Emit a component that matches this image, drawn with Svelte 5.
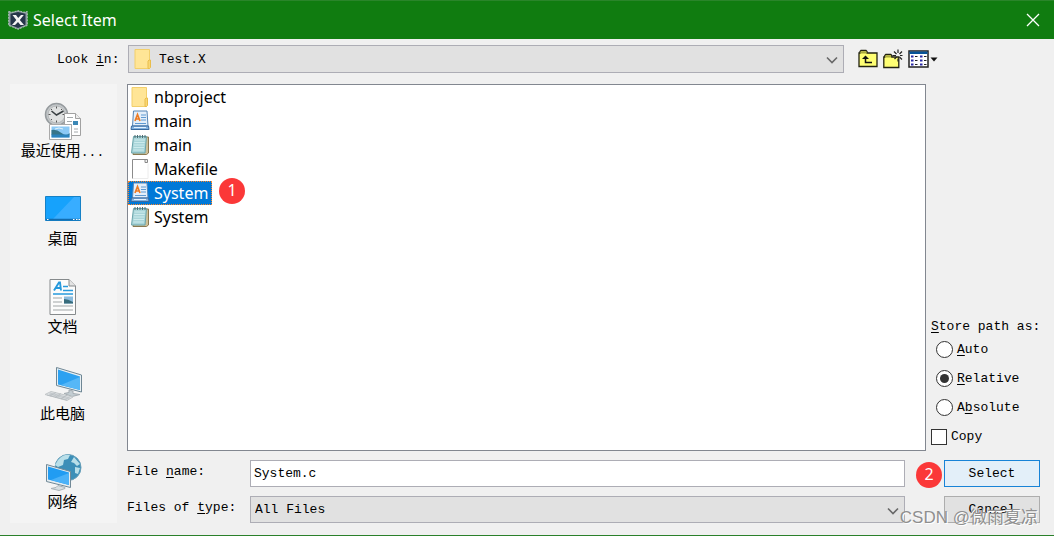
<script lang="ts">
  type FileKind = 'folder' | 'source' | 'header' | 'blank';
  type Place = 'recent' | 'desktop' | 'documents' | 'computer' | 'network';

  const places: { id: Place; label: string; more?: boolean }[] = [
    { id: 'recent', label: '最近使用', more: true },
    { id: 'desktop', label: '桌面' },
    { id: 'documents', label: '文档' },
    { id: 'computer', label: '此电脑' },
    { id: 'network', label: '网络' }
  ];

  const files: { name: string; kind: FileKind }[] = [
    { name: 'nbproject', kind: 'folder' },
    { name: 'main', kind: 'source' },
    { name: 'main', kind: 'header' },
    { name: 'Makefile', kind: 'blank' },
    { name: 'System', kind: 'source' },
    { name: 'System', kind: 'header' }
  ];

  // label split around the underlined mnemonic
  const pathModes = [
    { value: 'auto', before: '', key: 'A', after: 'uto' },
    { value: 'relative', before: '', key: 'R', after: 'elative' },
    { value: 'absolute', before: 'A', key: 'b', after: 'solute' }
  ];

  let selected = $state(4);
  let pathMode = $state('relative');
  let copy = $state(false);
  let fileName = $state('System.c');
</script>

{#snippet fileIcon(kind: FileKind)}
  <svg class="file-icon" viewBox="0 0 20 22" aria-hidden="true">
    {#if kind === 'folder'}
      <path d="M2 1.500h14.500v19H2z" fill="#ffe596" stroke="#f2cf6b" />
      <path d="M15 20.500v-7.500l1-1h1.500v7.500l-1 1z" fill="#f9d774" stroke="#e9bd4c" />
    {:else if kind === 'source'}
      <path d="M3.500 1h13.500l1 15H2.500z" fill="#e4effa" stroke="#5585b5" />
      <path d="M1.500 16h17l.5 3.500H1z" fill="#82b2e0" stroke="#3a6a9f" />
      <path d="M4 17.500h12" stroke="#e4f2ff" />
      <path d="M5 11l2.500-6.500L10 11M6 9h3" fill="none" stroke="#ed7b24" stroke-width="1.700" />
      <path d="M11 5h5M11 7.500h5M11 10h5M5 13.500h11" stroke="#5f9ad2" />
    {:else if kind === 'header'}
      <path d="M4.500 3h14v16l-2 1.500H3z" fill="#cdbf98" stroke="#8b7950" />
      <path d="M3.500 2.500h13L15 19H1.500z" fill="#a9d5d9" stroke="#6ba5ac" />
      <path d="M4.500 6H15M4.200 8.500h10.500M3.900 11h10.500M3.600 13.500H14M3.300 16h10.500" stroke="#cdebed" />
      <path d="M5 1v3M7.500 1v3M10 1v3M12.500 1v3M15 1v3" stroke="#4f6a70" />
    {:else}
      <path d="M2.500 1.500h12.500l3.500 4v15h-16z" fill="#fff" />
      <path d="M2.500 20.500V1.500H15" fill="none" stroke="#8b8b8b" />
      <path d="M15 1.500h2.500V4.500H15z" fill="#eee" stroke="#888" />
      <path d="M18 5.500v15H3" fill="none" stroke="#ececec" />
    {/if}
  </svg>
{/snippet}

{#snippet placeIcon(id: Place)}
  <svg class="place-icon" viewBox="0 0 38 38" aria-hidden="true">
    {#if id === 'recent'}
      <circle cx="12.500" cy="12.500" r="11" fill="#c3c7c9" stroke="#969b9e" stroke-width="1.500" />
      <circle cx="12.500" cy="12.500" r="8.500" fill="#dfe1e1" stroke="#b5b8ba" />
      <path d="M12.500 4.500v2M12.500 18.500v2M4.500 12.500h2M18.500 12.500h2M7 7l1 1M18 7l-1 1M7 18l1-1" stroke="#555" />
      <path d="M7.500 9l5 4 7-4" fill="none" stroke="#383f42" stroke-width="1.600" />
      <path d="M20.500 11.500h11l5 5v17h-16z" fill="#fff" stroke="#a1a1a1" />
      <path d="M31.500 11.500v5h5" fill="#eee" stroke="#a1a1a1" />
      <path d="M23 15.500h6M23 19.500h5M23 22.500h5M30 27h4M30 30h4" stroke="#a4a9ab" />
      <path d="M29 19h5v4h-5z" fill="#3c87b5" />
      <path d="M5.500 22.500h22v15h-22z" fill="#fff" stroke="#aaa" />
      <path d="M7.500 24.500h18v11h-18z" fill="#8cc9f5" />
      <path d="M7.500 28q5-1 10 3t8 0v2h-18z" fill="#37758a" />
      <path d="M7.500 32.500h18v3h-18z" fill="#2c83bd" />
      <path d="M11 27l4-1 4 1" fill="none" stroke="#e3f3fb" />
    {:else if id === 'desktop'}
      <path d="M1.500 6.500h35v24h-35z" fill="#16a2fc" stroke="#1681c6" />
      <path d="M9 29L30 7h6v22z" fill="#38adff" />
      <path d="M2 29.500h34" stroke="#136cae" stroke-width="1.500" />
      <path d="M3 29.500h1.500M29 29.500h1.500M32 29.500h1.500M34.500 29.500H36" stroke="#fff" />
    {:else if id === 'documents'}
      <path d="M6 1.500h19l6.500 6.500v28.500H6z" fill="#fcfcfc" stroke="#868a8c" />
      <path d="M25 1.500V8h6.500" fill="#e4e4e4" stroke="#868a8c" />
      <path d="M10 12.500l5-8h1l1 8M12 10h4.500" fill="none" stroke="#2699dc" stroke-width="1.900" />
      <path d="M19 8.500h5M19 12.500h10M9 16h20" stroke="#2699dc" stroke-width="1.400" />
      <path d="M9 20h9M9 24h9M9 28h20M9 32h20" stroke="#a1a6a7" />
      <path d="M20 18.500h9v7h-9z" fill="#8bbcdf" />
      <path d="M20 21q4 0 9 3v1.500h-9z" fill="#386c7c" />
    {:else if id === 'computer'}
      <path d="M12.500 2.500l25 7.500v17l-25-6.500z" fill="#e8f0f4" stroke="#6e8694" />
      <path d="M14 4.500l22 7v13.500L14 19.500z" fill="#2ca1f1" />
      <path d="M17 20L36 12v13z" fill="#56b7f7" />
      <path d="M25 25l4 1v2.500l7 1-8 2-8-3 5-1z" fill="#c3cdd2" stroke="#a5adb2" />
      <path d="M7 26.500l22 5.500-6 3.500-22-6z" fill="#dfe3e5" stroke="#c2c6c8" />
      <path d="M6 28l20 5M5 29l20 5M3 30l20 5M12 27.500l-6 3.500M17 28.500l-6 4M23 30l-6 4" stroke="#b1b8bc" stroke-width=".700" />
    {:else}
      <circle cx="24" cy="14.500" r="13" fill="#3c8fb8" stroke="#669eb8" />
      <path d="M14 7q5-6 12-5l-2 4-4 1-1 5-5 2-3-2zM30 4l6 7-3 2-3-3-3-1zM31 14l5 1-2 6-3-1z" fill="#b9dfe9" />
      <path d="M2.500 11.500l24 7v16l-24-6z" fill="#e5edf1" stroke="#718997" />
      <path d="M4 13.500l21 6v12.500L4 26.500z" fill="#219cf2" />
      <path d="M7 27l18-7v12z" fill="#4bb2f8" />
      <path d="M14 32.500l7 2v1l-6 2-8-2 5-1z" fill="#d8dfe2" stroke="#a8b2b7" />
    {/if}
  </svg>
{/snippet}

{#snippet chevron()}
  <svg class="chevron" viewBox="0 0 12 8" aria-hidden="true">
    <path d="M1 1.500l5 5 5-5" fill="none" stroke="#686868" stroke-width="1.600" />
  </svg>
{/snippet}

<div class="dialog" role="dialog" aria-labelledby="dialog-title">
  <header class="titlebar">
    <svg class="app-icon" viewBox="0 0 20 20" aria-hidden="true">
      <path d="M.7 1.500l3.300.8L10 .7l6 1.600 3.300-.8v14l-3.300 1.200-6 2.600-6-2.600-3.300-1.200z" fill="#8d9ba0" stroke="#b4c4c0" stroke-dasharray="2 1" />
      <path d="M2.500 3.800L10 2l7.500 1.800v11L10 18l-7.500-3.200z" fill="#26364a" />
      <path d="M4.500 5h3.500l2.200 3L13 5h2.800l-4 5 4.200 5h-3.500L10 12l-3 3H4l4.300-5z" fill="#f3f3f3" />
    </svg>
    <h1 id="dialog-title">Select Item</h1>
    <button class="close" type="button" aria-label="Close">
      <svg viewBox="0 0 14 14" aria-hidden="true">
        <path d="M1 1l12 12M13 1L1 13" stroke="#fff" stroke-width="1.300" />
      </svg>
    </button>
  </header>

  <div class="toolbar">
    <label for="look-in">Look <u>i</u>n:</label>
    <div class="combo combo--folder">
      <select id="look-in">
        <option>Test.X</option>
      </select>
      {@render fileIcon('folder')}
      {@render chevron()}
    </div>
    <div class="tools">
      <button type="button" aria-label="Up one level">
        <svg width="20" height="20" viewBox="0 0 20 20" aria-hidden="true">
          <path d="M1 17.500V4h1V2.500L3 1.500h5l1 1V4h10v13.500z" fill="#ffff73" stroke="#222210" stroke-width="1.300" />
          <path d="M2.500 3.500H8.500" stroke="#a8a83c" stroke-width="2" />
          <path d="M7.500 8v5.500H14" fill="none" stroke="#111" stroke-width="1.500" />
          <path d="M4 10l3.500-3.500L11 10z" fill="#111" />
        </svg>
      </button>
      <button type="button" aria-label="Create new folder">
        <svg width="20" height="20" viewBox="0 0 20 20" aria-hidden="true">
          <path d="M.8 18.500V8h1V6.500l1-1h5l1 1V8h7v10.500z" fill="#ffff73" stroke="#222210" stroke-width="1.300" />
          <path d="M2.500 7.500H8" stroke="#a8a83c" stroke-width="2" />
          <path
            d="M15 .5v3.500M15 9.500v3M9.500 6.500h3.500M17 6.500h2.500M11 2.500l2.500 2.500M19 2.500L16.500 5M19 10.500L16.500 8M11.500 10l2-2"
            stroke="#222"
            stroke-width="1.200"
          />
        </svg>
      </button>
      <button type="button" aria-label="View menu">
        <svg width="30" height="18" viewBox="0 0 30 18" aria-hidden="true">
          <path d="M1 1h19v16H1z" fill="#fff" stroke="#222" stroke-width="1.500" />
          <path d="M1.500 1.500h18v2.500h-18z" fill="#075397" />
          <path d="M3 6.500h2.500M3 10.500h2.500M3 14.500h2.500M12 6.500h2.500M12 10.500h2.500M12 14.500h2.500" stroke="#2929a6" stroke-width="2.200" />
          <path d="M7 6.500h2.500M7 10.500h2.500M7 14.500h2.500M16 6.500h2.500M16 10.500h2.500M16 14.500h2.500" stroke="#222" stroke-width="1.200" />
          <path d="M22.500 7.500h7L26 11.500z" fill="#111" />
        </svg>
      </button>
    </div>
  </div>

  <div class="body">
    <nav class="places" aria-label="Places">
      {#each places as place (place.id)}
        <button class="place" type="button">
          {@render placeIcon(place.id)}
          <span>{place.label}{#if place.more}<span class="dots">...</span>{/if}</span>
        </button>
      {/each}
    </nav>

    <div class="content">
      <div class="browse">
        <ul class="files" role="listbox" aria-label="Files">
          {#each files as file, i}
            <li role="option" aria-selected={selected === i}>
              <button
                class="file"
                class:file--selected={selected === i}
                type="button"
                onclick={() => (selected = i)}
              >
                {@render fileIcon(file.kind)}
                <span>{file.name}</span>
              </button>
              {#if i === 4}
                <span class="badge badge--list">1</span>
              {/if}
            </li>
          {/each}
        </ul>

        <fieldset class="options">
          <legend><u>S</u>tore path as:</legend>
          {#each pathModes as mode (mode.value)}
            <label class="option option--radio">
              <input type="radio" name="path-mode" value={mode.value} bind:group={pathMode} />
              <span>{mode.before}<u>{mode.key}</u>{mode.after}</span>
            </label>
          {/each}
          <label class="option">
            <input type="checkbox" bind:checked={copy} />
            <span>Copy</span>
          </label>
        </fieldset>
      </div>

      <div class="field-row">
        <label for="file-name">File <u>n</u>ame:</label>
        <input id="file-name" class="text" type="text" bind:value={fileName} />
        <div class="action">
          <button class="btn btn--default" type="button">Select</button>
          <span class="badge badge--select">2</span>
        </div>
      </div>

      <div class="field-row">
        <label for="file-type">Files of <u>t</u>ype:</label>
        <div class="combo">
          <select id="file-type">
            <option>All Files</option>
          </select>
          {@render chevron()}
        </div>
        <div class="action">
          <button class="btn" type="button">Cancel</button>
        </div>
      </div>
    </div>
  </div>

  <span class="watermark">CSDN @微雨夏凉</span>
</div>

<style>
  :global(body) {
    margin: 0;
    background: #f0f0f0;
  }

  .dialog {
    --mono: 'Liberation Mono', 'Noto Sans CJK SC', monospace;
    --ui: 'Noto Sans', 'Noto Sans CJK SC', sans-serif;
    position: relative;
    display: flex;
    flex-direction: column;
    box-sizing: border-box;
    min-height: 100vh;
    border-bottom: 1px solid #2a802a;
    background: #f0f0f0;
    color: #000;
    font-family: var(--mono);
    font-size: 13px;
    line-height: 20px;
  }

  .dialog *,
  .dialog *::before {
    box-sizing: border-box;
  }

  button,
  input,
  select {
    margin: 0;
    font: inherit;
    color: inherit;
  }

  svg {
    display: block;
    flex: none;
  }

  u {
    text-underline-offset: 2px;
  }

  .titlebar {
    display: flex;
    align-items: center;
    height: 39px;
    padding: 0 8px;
    border-top: 1px solid #2a852a;
    background: #107c10;
    color: #fff;
  }

  .app-icon {
    width: 20px;
    height: 20px;
  }

  h1 {
    flex: 1;
    margin: 0 0 0 5px;
    font-family: var(--ui);
    font-size: 16px;
    font-weight: 400;
    line-height: 22px;
  }

  .close {
    padding: 6px;
    border: 0;
    background: none;
  }

  .close svg {
    width: 14px;
    height: 14px;
  }

  .toolbar {
    display: flex;
    align-items: center;
    padding: 6px 116px 10px 57px;
  }

  .toolbar label {
    width: 71px;
    padding-top: 2px;
  }

  .combo {
    position: relative;
    flex: 1;
    min-width: 0;
  }

  .combo select {
    display: block;
    width: 100%;
    height: 27px;
    padding: 0 24px 0 4px;
    border: 1px solid #adadb5;
    border-radius: 0;
    background: #e1e1e1;
    appearance: none;
  }

  .combo--folder select {
    height: 28px;
    padding: 2px 24px 0 30px;
  }

  .combo .file-icon {
    position: absolute;
    top: 3px;
    left: 5px;
    pointer-events: none;
  }

  .chevron {
    position: absolute;
    top: 11px;
    right: 6px;
    width: 12px;
    height: 8px;
    pointer-events: none;
  }

  .tools {
    display: flex;
    align-items: center;
    gap: 5px;
    margin-left: 14px;
  }

  .tools button {
    padding: 0;
    border: 0;
    background: none;
  }

  .body {
    display: flex;
    flex: 1;
    gap: 10px;
    padding: 1px 14px 12px 10px;
  }

  .places {
    display: flex;
    flex: none;
    flex-direction: column;
    width: 107px;
    background: #f4f4f4;
  }

  .place {
    display: flex;
    flex: 1;
    flex-direction: column;
    align-items: center;
    padding: 18px 2px 8px 0;
    border: 0;
    background: none;
    font-family: 'Noto Sans CJK SC', sans-serif;
    font-size: 15px;
    line-height: 20px;
    white-space: nowrap;
  }

  .place-icon {
    width: 38px;
    height: 38px;
  }

  .dots {
    font-family: var(--mono);
    font-size: 13px;
  }

  .content {
    display: flex;
    flex: 1;
    flex-direction: column;
    gap: 9px;
    min-width: 0;
  }

  .browse {
    display: flex;
    flex: 1;
    gap: 5px;
  }

  .files {
    flex: 1;
    min-width: 0;
    margin: 0;
    padding: 0;
    border: 1px solid #828790;
    background: #fff;
    list-style: none;
  }

  .files li {
    position: relative;
    display: flex;
    height: 24px;
  }

  .file {
    display: flex;
    align-items: center;
    gap: 4px;
    height: 24px;
    padding: 0 3px 0 1px;
    border: 1px solid transparent;
    background: none;
    font-family: var(--ui);
    font-size: 16px;
    line-height: 22px;
  }

  .file--selected {
    border: 1px dotted #ff8728;
    background: #0078d7;
    color: #fff;
  }

  .file-icon {
    width: 20px;
    height: 22px;
  }

  .badge {
    position: absolute;
    width: 26px;
    height: 26px;
    border-radius: 50%;
    background: #fb3838;
    color: #fff;
    font-family: var(--ui);
    font-size: 16px;
    line-height: 25px;
    text-align: center;
  }

  .badge--list {
    top: -3px;
    left: 91px;
  }

  .badge--select {
    top: 2px;
    left: -28px;
  }

  .options {
    display: flex;
    flex: none;
    flex-direction: column;
    justify-content: flex-end;
    width: 109px;
    min-width: 0;
    margin: 0;
    padding: 0;
    border: 0;
    white-space: nowrap;
  }

  /* floated so the legend joins the flex column */
  .options legend {
    float: left;
    padding: 0;
    line-height: 16px;
  }

  .option {
    display: flex;
    align-items: center;
    gap: 4px;
    height: 29px;
  }

  .option--radio {
    padding-left: 5px;
  }

  .option input {
    flex: none;
    width: 16px;
    height: 16px;
    border: 1px solid #333;
    background: #fff;
    appearance: none;
  }

  .option input[type='radio'] {
    display: grid;
    place-items: center;
    width: 17px;
    height: 17px;
    border-radius: 50%;
  }

  .option input[type='radio']:checked::before {
    width: 9px;
    height: 9px;
    border-radius: 50%;
    background: #333;
    content: '';
  }

  .option input[type='checkbox']:checked {
    background: #0078d7;
  }

  .field-row {
    display: flex;
    align-items: center;
  }

  .field-row label {
    width: 123px;
    padding-bottom: 3px;
  }

  .text {
    flex: 1;
    min-width: 0;
    height: 27px;
    padding: 0 3px;
    border: 1px solid #adadb5;
    background: #fff;
  }

  .action {
    position: relative;
    width: 96px;
    margin-left: 39px;
  }

  .btn {
    display: block;
    width: 100%;
    height: 27px;
    padding: 0;
    border: 1px solid #adadad;
    background: #e1e1e1;
  }

  .btn--default {
    border-color: #1883d7;
    background: #e3eff9;
  }

  .watermark {
    position: absolute;
    right: 16px;
    bottom: 4px;
    color: #8f8f8f;
    font-family: 'Liberation Sans', 'Noto Sans CJK SC', sans-serif;
    font-size: 17px;
    line-height: 26px;
    text-shadow: 1px 1px 0 #fff;
    pointer-events: none;
  }
</style>
